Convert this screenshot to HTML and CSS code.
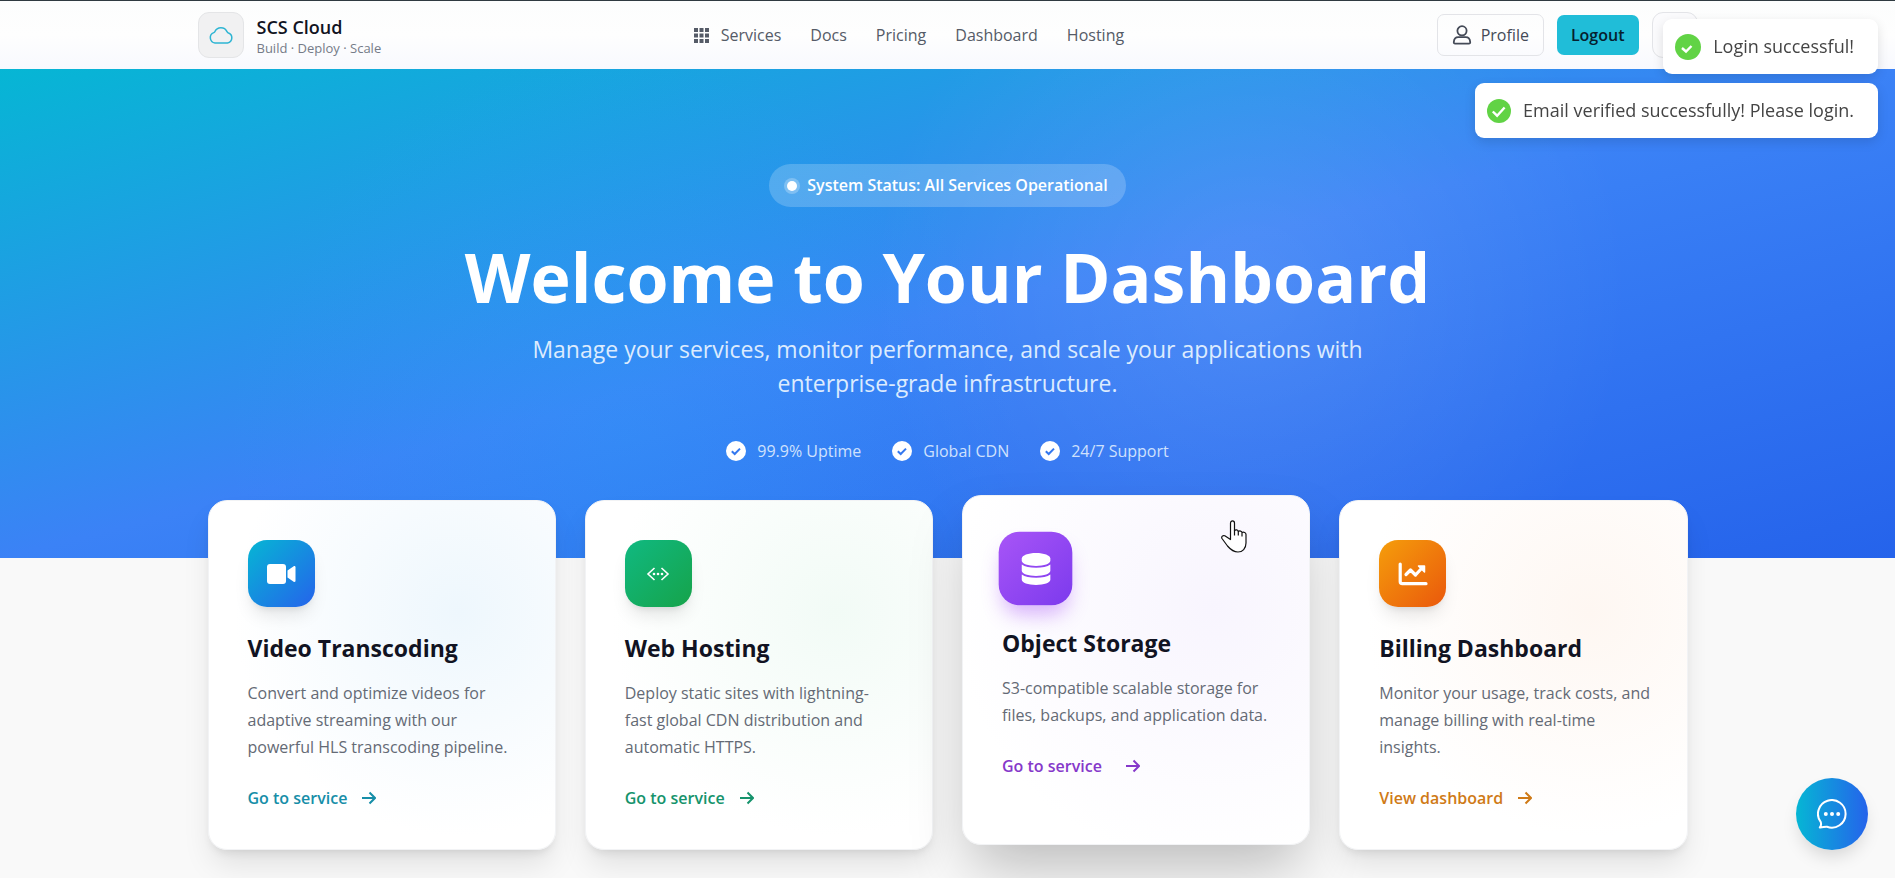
FILE: index.html
```html
<!DOCTYPE html>
<html lang="en">
<head>
<meta charset="utf-8">
<meta name="viewport" content="width=device-width, initial-scale=1">
<title>SCS Cloud</title>
<link rel="stylesheet" href="styles.css">
</head>
<body>
<header class="topbar">
  <div class="topbar-inner">
    <a class="brand" href="#">
      <span class="brand-mark">
        <svg viewBox="0 0 26 26" width="26" height="26" fill="none" stroke="currentColor" stroke-width="1.5" stroke-linejoin="round"><path d="M7 21a5.400 5.400 0 0 1-1.200-10.400c.3-.1.8-.3 1-.8A6.700 6.700 0 0 1 19 9.600c.2.600.5.900 1 1.100A5.300 5.300 0 0 1 19.500 21z"/></svg>
      </span>
      <span class="brand-text">
        <span class="brand-name">SCS Cloud</span>
        <span class="brand-tag">Build · Deploy · Scale</span>
      </span>
    </a>
    <nav class="nav" aria-label="Main">
      <a class="nav-link" href="#">
        <svg viewBox="0 0 15 15" width="15" height="15" fill="currentColor"><path d="M0 0h4v4H0zM5.500 0h4v4h-4zM11 0h4v4h-4zM0 5.500h4v4H0zM5.500 5.500h4v4h-4zM11 5.500h4v4h-4zM0 11h4v4H0zM5.500 11h4v4h-4zM11 11h4v4h-4z"/></svg>
        Services</a>
      <a class="nav-link" href="#">Docs</a>
      <a class="nav-link" href="#">Pricing</a>
      <a class="nav-link" href="#">Dashboard</a>
      <a class="nav-link" href="#">Hosting</a>
    </nav>
    <div class="actions">
      <a class="profile" href="#">
        <svg viewBox="0 0 20 20" width="20" height="20" fill="none" stroke="currentColor" stroke-width="1.800" stroke-linejoin="round"><circle cx="10" cy="5.800" r="4.600"/><path d="M6.300 12.200h7.400c2.500 0 4.300 1.900 4.500 4.900.1 1-.4 1.600-1.300 1.600H3.100c-.9 0-1.400-.6-1.300-1.600.2-3 2-4.900 4.500-4.900z"/></svg>
        Profile</a>
      <button class="logout" type="button">Logout</button>
      <button class="theme" type="button" aria-label="Toggle theme"></button>
    </div>
  </div>
</header>

<main>
  <section class="hero">
    <p class="status"><span class="status-dot"></span>System Status: All Services Operational</p>
    <h1 class="hero-title">Welcome to Your Dashboard</h1>
    <p class="hero-lead">Manage your services, monitor performance, and scale your applications with enterprise-grade infrastructure.</p>
    <ul class="perks">
      <li class="perk"><svg viewBox="0 0 20 20" width="20" height="20"><circle cx="10" cy="10" r="10" fill="#fff"/><path d="M5.800 10.200l2.900 2.800 5.300-5.400" fill="none" stroke="#3478ef" stroke-width="2"/></svg>99.9% Uptime</li>
      <li class="perk"><svg viewBox="0 0 20 20" width="20" height="20"><circle cx="10" cy="10" r="10" fill="#fff"/><path d="M5.800 10.200l2.900 2.800 5.300-5.400" fill="none" stroke="#3478ef" stroke-width="2"/></svg>Global CDN</li>
      <li class="perk"><svg viewBox="0 0 20 20" width="20" height="20"><circle cx="10" cy="10" r="10" fill="#fff"/><path d="M5.800 10.200l2.900 2.800 5.300-5.400" fill="none" stroke="#3478ef" stroke-width="2"/></svg>24/7 Support</li>
    </ul>
  </section>

  <section class="cards" aria-label="Services">
    <article class="card card-video">
      <span class="card-icon"><svg viewBox="0 0 30 30" width="30" height="30" fill="currentColor"><rect x="1" y="5" width="19" height="20" rx="3"/><path d="M21.500 11.500l6.200-4.300c.8-.5 1.800 0 1.800 1v13.600c0 1-1 1.500-1.800 1l-6.200-4.300z"/></svg></span>
      <h2 class="card-title">Video Transcoding</h2>
      <p class="card-text">Convert and optimize videos for adaptive streaming with our powerful HLS transcoding pipeline.</p>
      <a class="card-link" href="#">Go to service<svg viewBox="0 0 14 14" width="14" height="14" fill="none" stroke="currentColor" stroke-width="2"><path d="M0 7h13M7.500 1.500L13 7l-5.500 5.500"/></svg></a>
    </article>
    <article class="card card-hosting">
      <span class="card-icon"><svg viewBox="0 0 30 30" width="30" height="30" fill="none" stroke="currentColor" stroke-width="1.600"><path d="M11.500 9L5 15l6.500 6M18.500 9l6.500 6-6.500 6"/><g fill="currentColor" stroke="none"><circle cx="11" cy="15" r="1.300"/><circle cx="15" cy="15" r="1.300"/><circle cx="19" cy="15" r="1.300"/></g></svg></span>
      <h2 class="card-title">Web Hosting</h2>
      <p class="card-text">Deploy static sites with lightning-<br>fast global CDN distribution and automatic HTTPS.</p>
      <a class="card-link" href="#">Go to service<svg viewBox="0 0 14 14" width="14" height="14" fill="none" stroke="currentColor" stroke-width="2"><path d="M0 7h13M7.500 1.500L13 7l-5.500 5.500"/></svg></a>
    </article>
    <article class="card card-storage is-hovered">
      <span class="card-icon"><svg viewBox="0 0 30 30" width="30" height="30" fill="currentColor"><path d="M2 5.500C2 2.700 7.800.5 15 .5s13 2.200 13 5v2c0 2.700-5.800 4.700-13 4.700S2 10.200 2 7.500z"/><path d="M2 10.800c2.700 2 7.500 3 13 3s10.300-1 13-3v5.800c0 2.700-5.800 4.700-13 4.700S2 19.300 2 16.600z"/><path d="M2 20c2.700 2 7.500 3 13 3s10.300-1 13-3v4.800c0 2.700-5.800 4.700-13 4.700S2 27.500 2 24.800z"/></svg></span>
      <h2 class="card-title">Object Storage</h2>
      <p class="card-text">S3-compatible scalable storage for files, backups, and application data.</p>
      <a class="card-link" href="#">Go to service<svg viewBox="0 0 14 14" width="14" height="14" fill="none" stroke="currentColor" stroke-width="2"><path d="M0 7h13M7.500 1.500L13 7l-5.500 5.500"/></svg></a>
      <svg class="pointer" viewBox="0 0 26 33" width="26" height="33" fill="#fff" stroke="#111" stroke-width="1.200" stroke-linejoin="round"><path d="M9.500 19.500V3.200c0-3 4-3 4 0v7.300c1-1 3.400-.8 3.800 1 1.300-1 3.400-.5 3.700 1 1.600-.8 4 0 4 2V23c0 5.500-3.500 9-8 9-5 0-7.500-2.500-10.500-6L1 18.500c-1-2 1-3.500 2.800-2.700z"/><path d="M13.500 10v5.500M17.300 11.500v4M21 12.500v4" fill="none"/></svg>
    </article>
    <article class="card card-billing">
      <span class="card-icon"><svg viewBox="0 0 30 30" width="30" height="30" fill="none" stroke="currentColor" stroke-width="3.200" stroke-linecap="round" stroke-linejoin="round"><path d="M2.200 5v17.500c0 1.500.8 2.200 2.200 2.200H28"/><path d="M8 15.500l4.500-4.500 5 5 6-6.500"/><path d="M20.500 7h6v6z" fill="currentColor" stroke-width="1.500"/></svg></span>
      <h2 class="card-title">Billing Dashboard</h2>
      <p class="card-text">Monitor your usage, track costs, and manage billing with real-time insights.</p>
      <a class="card-link" href="#">View dashboard<svg viewBox="0 0 14 14" width="14" height="14" fill="none" stroke="currentColor" stroke-width="2"><path d="M0 7h13M7.500 1.500L13 7l-5.500 5.500"/></svg></a>
    </article>
  </section>
</main>

<div class="toasts" role="status">
  <div class="toast"><svg viewBox="0 0 26 26" width="26" height="26"><circle cx="13" cy="13" r="13" fill="#61d345"/><path d="M7 14l4 3.500 5.500-5.500" fill="none" stroke="#fff" stroke-width="2.400"/></svg>Login successful!</div>
  <div class="toast"><svg viewBox="0 0 24 24" width="24" height="24"><circle cx="12" cy="12" r="12" fill="#61d345"/><path d="M5.800 12.500l4.300 4.200 7.500-8.200" fill="none" stroke="#fff" stroke-width="2.400"/></svg>Email verified successfully! Please login.</div>
</div>

<button class="chat" type="button" aria-label="Open chat">
  <svg viewBox="0 0 30 30" width="30" height="30" fill="none" stroke="currentColor" stroke-width="2" stroke-linejoin="round"><path d="M2.800 28.400c1.500-1.600 1.500-3.400 1-5.200A13.800 13.800 0 1 1 10 27.800c-2-.3-4.500.8-7.200.6z"/><g fill="currentColor" stroke="none"><circle cx="8.800" cy="15" r="2"/><circle cx="15" cy="15" r="2"/><circle cx="21.200" cy="15" r="2"/></g></svg>
</button>
</body>
</html>
```
FILE: styles.css
```css
* {
  box-sizing: border-box;
}

body {
  min-height: 100vh;
  margin: 0;
  background: #f9f9f9;
  color: #111322;
  font-family: "Open Sans", "Noto Sans", sans-serif;
  font-size: 16px;
  line-height: 24px;
}

svg {
  display: block;
  flex: none;
}

a {
  color: inherit;
  text-decoration: none;
}

button {
  font: inherit;
}

.topbar {
  border-top: 1px solid #2f3a40;
  background: linear-gradient(#fcfdfd, #fefefe 50%, #f8f9fe);
}

.topbar-inner {
  max-width: 1500px;
  height: 68px;
  margin: 0 auto;
  display: flex;
  justify-content: space-between;
  align-items: center;
}

.brand {
  display: flex;
  align-items: center;
  gap: 13px;
}

.brand-mark {
  display: grid;
  place-items: center;
  width: 46px;
  height: 46px;
  border: 1px solid #e4e5e7;
  border-radius: 11px;
  background: #f1f1f2;
  color: #2eb5d3;
}

.brand-text {
  display: flex;
  flex-direction: column;
  padding-top: 2px;
}

.brand-name {
  font-size: 18px;
  font-weight: 600;
  line-height: 24px;
}

.brand-tag {
  color: #757b88;
  font-size: 13px;
  line-height: 18px;
}

.nav {
  display: flex;
  gap: 29px;
}

.nav-link {
  display: flex;
  align-items: center;
  gap: 12px;
  color: #555b67;
}

.actions {
  display: flex;
  align-items: center;
  justify-content: flex-end;
  gap: 13px;
}

.profile {
  display: flex;
  align-items: center;
  gap: 9px;
  padding: 8px 14px;
  border: 1px solid #e3e4e8;
  border-radius: 7px;
  color: #444a57;
}

.logout {
  padding: 8px 14px;
  border: 0;
  border-radius: 7px;
  background: #20bdd8;
  color: #06202e;
  font-weight: 600;
}

.theme {
  width: 46px;
  height: 46px;
  border: 1px solid #e3e4e8;
  border-radius: 11px;
  background: #fbfbfd;
}

.hero {
  display: flex;
  flex-direction: column;
  align-items: center;
  padding: 95px 24px 95px;
  background:
    radial-gradient(circle at 66% 45%, rgba(255, 255, 255, 0.1), transparent 380px),
    radial-gradient(circle at 33% 75%, rgba(34, 180, 250, 0.2), transparent 400px),
    linear-gradient(to bottom right, #06b6d4, #3b82f6 50%, #2563eb);
  color: #fff;
  text-align: center;
}

.status {
  display: flex;
  align-items: center;
  gap: 10px;
  margin: 0;
  padding: 10px 18px;
  border-radius: 22px;
  background: rgba(255, 255, 255, 0.2);
  font-weight: 600;
  line-height: 23px;
}

.status-dot {
  width: 10px;
  height: 10px;
  border-radius: 50%;
  background: #fff;
  box-shadow: 0 0 0 3px rgba(255, 255, 255, 0.25);
}

.hero-title {
  margin: 34px 0 0;
  font-size: 68px;
  font-weight: 700;
  line-height: 72px;
}

.hero-lead {
  max-width: 860px;
  margin: 19px 0 0;
  color: #dcebfe;
  font-size: 23px;
  line-height: 34px;
}

.perks {
  display: flex;
  flex-wrap: wrap;
  gap: 31px;
  margin: 39px 0 0;
  padding: 0;
  list-style: none;
  color: #cfe1fd;
}

.perk {
  display: flex;
  align-items: center;
  gap: 11px;
}

.cards {
  display: grid;
  grid-template-columns: repeat(4, 1fr);
  gap: 29px;
  max-width: 1480px;
  margin: -58px auto 0;
}

.card {
  position: relative;
  padding: 39px 28px 39px 39px;
  border: 1px solid #f2f3f5;
  border-radius: 19px;
  background: #fff;
  box-shadow: 0 18px 30px -4px rgba(0, 0, 0, 0.1), 0 6px 10px -4px rgba(0, 0, 0, 0.1);
}

.card.is-hovered {
  transform: translateY(-5px);
  box-shadow: 0 30px 60px -10px rgba(0, 0, 0, 0.26);
}

.card-icon {
  display: grid;
  place-items: center;
  width: 67px;
  height: 67px;
  border-radius: 19px;
  color: #fff;
  box-shadow: 0 12px 18px -4px rgba(0, 0, 0, 0.1), 0 5px 7px -4px rgba(0, 0, 0, 0.1);
}

.is-hovered .card-icon {
  transform: scale(1.1);
  box-shadow: 0 12px 18px -4px rgba(168, 85, 247, 0.45);
}

.card-title {
  margin: 24px 0 0;
  font-size: 23px;
  font-weight: 700;
  line-height: 34px;
}

.card-text {
  margin: 15px 0 0;
  color: #646a75;
  line-height: 27px;
}

.card-link {
  display: inline-flex;
  align-items: center;
  gap: 15px;
  margin-top: 25px;
  font-weight: 600;
}

.is-hovered .card-link {
  gap: 24px;
}

.card-video {
  background: radial-gradient(circle at 72% 32%, #eef7fd, #fff 65%);
}

.card-video .card-icon {
  background: linear-gradient(135deg, #06b6d4, #2563eb);
}

.card-video .card-link {
  color: #168ea8;
}

.card-hosting {
  background: radial-gradient(circle at 72% 32%, #f2fbf6, #fff 65%);
}

.card-hosting .card-icon {
  background: linear-gradient(135deg, #10b981, #16a34a);
}

.card-hosting .card-link {
  color: #15936c;
}

.card-storage {
  background: radial-gradient(circle at 72% 32%, #f8f5fe, #fff 75%);
}

.card-storage .card-icon {
  background: linear-gradient(135deg, #a855f7, #7c3aed);
}

.card-storage .card-link {
  color: #8638ca;
}

.card-billing {
  background: radial-gradient(circle at 72% 32%, #fef7f2, #fff 65%);
}

.card-billing .card-icon {
  background: linear-gradient(135deg, #f59e0b, #ea580c);
}

.card-billing .card-link {
  color: #cf7a17;
}

.pointer {
  position: absolute;
  top: 24px;
  right: 62px;
}

.toasts {
  position: fixed;
  top: 19px;
  right: 17px;
  display: flex;
  flex-direction: column;
  align-items: flex-end;
  gap: 9px;
}

.toast {
  display: flex;
  align-items: center;
  gap: 12px;
  padding: 14px 24px 14px 12px;
  border-radius: 9px;
  background: #fff;
  box-shadow: 0 4px 12px rgba(0, 0, 0, 0.12);
  color: #444;
  font-size: 18px;
  line-height: 27px;
}

.chat {
  position: fixed;
  right: 27px;
  bottom: 28px;
  display: grid;
  place-items: center;
  width: 72px;
  height: 72px;
  padding: 0;
  border: 0;
  border-radius: 50%;
  background: linear-gradient(90deg, #06b6d4, #2563eb);
  box-shadow: 0 10px 18px -4px rgba(0, 0, 0, 0.15);
  color: #fff;
}
```
